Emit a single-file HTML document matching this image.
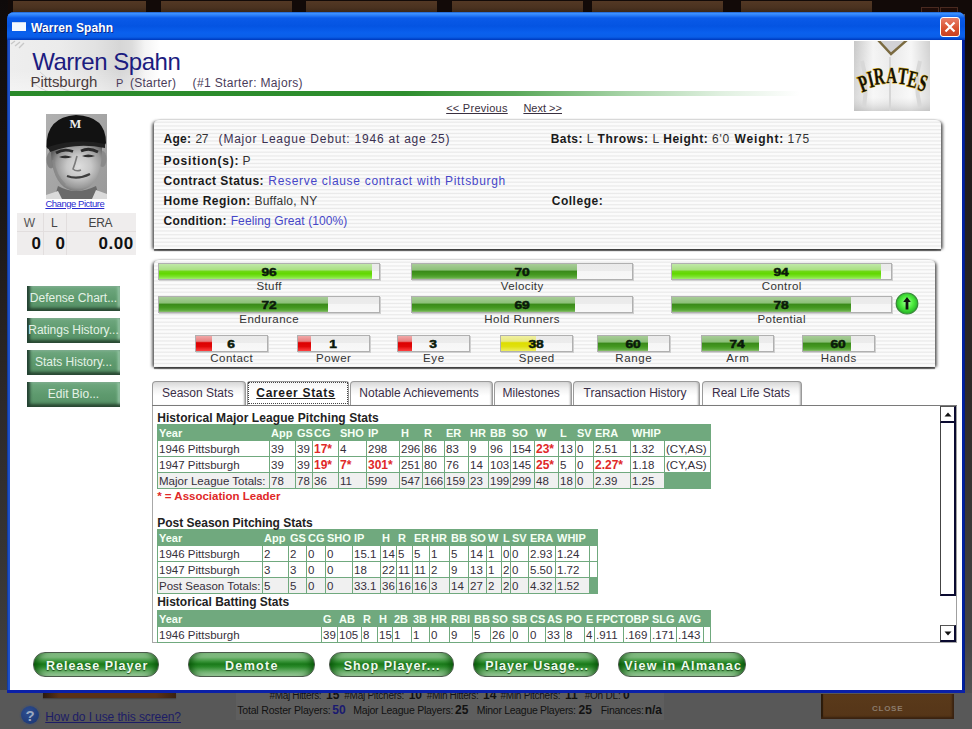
<!DOCTYPE html>
<html><head><meta charset="utf-8">
<style>
*{margin:0;padding:0;box-sizing:border-box}
html,body{width:972px;height:729px;overflow:hidden}
body{position:relative;background:#5e5e5e;font-family:"Liberation Sans",sans-serif;color:#222}
.a{position:absolute;white-space:pre}
.b{position:absolute}
.stripes{background:repeating-linear-gradient(#fbfbfb 0,#fbfbfb 1px,#e9e9e9 2.2px,#fbfbfb 3.4px,#fbfbfb 3.75px)}
</style></head><body>
<div class="b" style="left:0;top:0;width:972px;height:14px;background:#120a08"></div>
<div class="b" style="left:13px;top:1px;width:133px;height:11px;background:linear-gradient(#533824,#4a3220 60%,#3c2818)"></div>
<div class="b" style="left:161px;top:1px;width:131px;height:11px;background:linear-gradient(#533824,#4a3220 60%,#3c2818)"></div>
<div class="b" style="left:306px;top:1px;width:131px;height:11px;background:linear-gradient(#533824,#4a3220 60%,#3c2818)"></div>
<div class="b" style="left:452px;top:1px;width:131px;height:11px;background:linear-gradient(#533824,#4a3220 60%,#3c2818)"></div>
<div class="b" style="left:592px;top:1px;width:131px;height:11px;background:linear-gradient(#533824,#4a3220 60%,#3c2818)"></div>
<div class="b" style="left:741px;top:1px;width:131px;height:11px;background:linear-gradient(#533824,#4a3220 60%,#3c2818)"></div>
<div class="b" style="left:921px;top:7px;width:18px;height:8px;border:1px solid #4a2a20;background:#1e0c08"></div>
<div class="b" style="left:940px;top:7px;width:18px;height:8px;border:1px solid #4a2a20;background:#1e0c08"></div>
<div class="b" style="left:0;top:0;width:8px;height:693px;background:linear-gradient(#0e0a0a 0,#1a1616 200px,#2c2828 390px,#363434 550px,#424242 693px)"></div>
<div class="b" style="left:965px;top:0;width:7px;height:729px;background:linear-gradient(#120a08 0,#120a08 40px,#1e1a1a 120px,#2e2a28 390px,#444 640px,#555 700px)"></div>
<div class="b" style="left:7px;top:12px;width:958px;height:681px;background:linear-gradient(90deg,#0a2a80 0,#1a4cc0 1px,#1e50c8 2px,#1e50c8 calc(100% - 4px),#0020a0 calc(100% - 3px),#0020a0 calc(100% - 1px),#0a1a60 100%);border-radius:7px 7px 0 0"></div>
<div class="b" style="left:7px;top:12px;width:958px;height:28px;border-radius:7px 7px 0 0;background:linear-gradient(#2060c8 0,#3c90ff 1.5px,#2e82fa 3px,#0a5ae8 6px,#0454e2 14px,#0a60ee 21px,#0a5ee8 25px,#0044cc 27px,#0038b8 28px)"></div>
<div class="b" style="left:10px;top:40px;width:952px;height:650px;background:#fff;overflow:hidden"></div>
<div class="b" style="left:12px;top:22px;width:14px;height:9px;background:#f4f8ff;border-top:1px solid #c8d8f0"></div>
<div class="b" style="left:940px;top:17px;width:20px;height:20px;border-radius:3px;border:1px solid #fff;background:linear-gradient(#e8806a,#d8502e 60%,#c84020)"></div>
<svg class="b" style="left:940px;top:17px" width="20" height="20"><path d="M5.5 5.5L14.5 14.5M14.5 5.5L5.5 14.5" stroke="#fff" stroke-width="2.2"/></svg>
<div class="b" style="left:10px;top:40px;width:150px;height:51px;background:linear-gradient(90deg,#eeeeee 0,#ebebeb 50px,#e2e2e2 85px,#d6d6d6 110px,#dcdcdc 122px,#f4f4f4 135px,rgba(255,255,255,0) 150px)"></div>
<div class="b" style="left:10px;top:40px;width:150px;height:51px;background:linear-gradient(#fff0 0,#fff0 60%,rgba(255,255,255,.35) 100%)"></div>
<svg class="b" style="left:10px;top:40px" width="160" height="51"><g stroke="#c8c8c8" stroke-width="1.4" fill="none"><path d="M1 4L5 1M5 6L10 2M9 8L14 3"/></g><path d="M20 40Q40 60 70 51M30 32Q50 50 62 52" stroke="#d4d4d4" stroke-width="1" fill="none"/></svg>
<div class="b" style="left:10px;top:91px;width:790px;height:5px;background:linear-gradient(90deg,#2a8a2a 0,#2e8e2e 50%,#5aa85a 64%,#a8d4a8 78%,#e0f0e0 90%,rgba(255,255,255,0) 100%)"></div>
<svg class="b" style="left:854px;top:41px" width="76" height="70" viewBox="0 0 76 70">
<defs><linearGradient id="jg" x1="0" x2="1"><stop offset="0" stop-color="#c8c8c8"/><stop offset=".25" stop-color="#f4f4f4"/><stop offset=".5" stop-color="#e8e8e8"/><stop offset=".75" stop-color="#f6f6f6"/><stop offset="1" stop-color="#d0d0d0"/></linearGradient>
<linearGradient id="jv" x1="0" y1="0" x2="0" y2="1"><stop offset="0" stop-color="#fff" stop-opacity=".0"/><stop offset=".8" stop-color="#fff" stop-opacity=".3"/><stop offset="1" stop-color="#bbb" stop-opacity=".6"/></linearGradient></defs>
<rect width="76" height="70" fill="url(#jg)"/>
<rect width="76" height="70" fill="url(#jv)"/>
<path d="M8 20Q14 40 10 66M66 20Q60 40 66 66" stroke="#d8d8d8" stroke-width="4" fill="none"/>
<path d="M36 16L36 70" stroke="#d6d6d6" stroke-width="2"/>
<path d="M24 -1L37 13L53 -1" fill="#d2d2d6" stroke="#7a6a40" stroke-width="2.4"/>
<g font-family="Liberation Serif" font-weight="bold" font-size="24" fill="#161208" stroke="#e0b828" stroke-width="1.1" paint-order="stroke"><text transform="translate(12,50) rotate(-20) scale(0.62,1)" text-anchor="middle">P</text><text transform="translate(18.5,46) rotate(-14) scale(0.62,1)" text-anchor="middle">I</text><text transform="translate(26,43) rotate(-7) scale(0.62,1)" text-anchor="middle">R</text><text transform="translate(37.5,42) rotate(0) scale(0.62,1)" text-anchor="middle">A</text><text transform="translate(48,43) rotate(7) scale(0.62,1)" text-anchor="middle">T</text><text transform="translate(57,46) rotate(13) scale(0.62,1)" text-anchor="middle">E</text><text transform="translate(66.5,49.5) rotate(18) scale(0.62,1)" text-anchor="middle">S</text></g>
</svg>
<svg class="b" style="left:46px;top:114px" width="61" height="85" viewBox="0 0 61 85">
<defs>
<radialGradient id="face" cx=".55" cy=".48" r=".6"><stop offset="0" stop-color="#dedede"/><stop offset=".4" stop-color="#c8c8c8"/><stop offset=".75" stop-color="#999"/><stop offset="1" stop-color="#5e5e5e"/></radialGradient>
<linearGradient id="bgp" x1="0" y1="0" x2="1" y2="1"><stop offset="0" stop-color="#b0b0b0"/><stop offset="1" stop-color="#999"/></linearGradient>
</defs>
<rect width="61" height="85" fill="url(#bgp)"/>
<path d="M8 85L12 72Q30 82 50 72L54 85Z" fill="#6a6a6a"/>
<path d="M0 85L0 81L12 77L16 85Z M61 85L61 80L50 76L46 85Z" fill="#dadada"/>
<ellipse cx="5" cy="46" rx="4.5" ry="8.5" fill="#808080"/>
<ellipse cx="56.5" cy="45" rx="4" ry="8" fill="#8a8a8a"/>
<path d="M5 30Q4 62 18 73Q30 81 43 73Q57 62 56 30Z" fill="url(#face)"/>
<path d="M0.5 33Q0 3 30 1Q60 2 60 29Q59 31 58 32Q30 25 2 35Z" fill="#121212"/>
<path d="M2 33Q30 24 59 30L59 34Q30 28 4 38Z" fill="#202020"/>
<text x="29.5" y="13.5" text-anchor="middle" font-family="Liberation Serif" font-weight="bold" font-size="12.5" fill="#eeeeee">M</text>
<path d="M10 39Q18 34 27 37.5M35 37Q43 33 52 38" stroke="#2a2a2a" stroke-width="2.8" fill="none"/>
<path d="M13 43Q19 40 26 43Q19 45.5 13 43Z M36 42Q42 39 49 42Q42 44.5 36 42Z" fill="#2e2e2e"/>
<path d="M31 42Q29 50 27 55Q30 58 35 56" stroke="#7a7a7a" stroke-width="1.6" fill="none"/>
<path d="M21 62Q32 66 44 60" stroke="#3e3e3e" stroke-width="2.2" fill="none"/>
<path d="M7 46Q9 62 19 71" stroke="#888" stroke-width="2.5" fill="none" opacity=".7"/>
</svg>
<div class="b" style="left:17px;top:213px;width:119px;height:42px;background:#efeded"></div>
<div class="b" style="left:43px;top:213px;width:1px;height:42px;background:#e2dede"></div>
<div class="b" style="left:66px;top:213px;width:1px;height:42px;background:#e2dede"></div>
<div class="b" style="left:17px;top:231px;width:119px;height:1px;background:#e2dede"></div>
<div class="b" style="left:27px;top:286px;width:93px;height:25px;background:linear-gradient(#70a880,#5e9a6e 50%,#558f64);box-shadow:inset 4px 0 3px -1px #244232,inset 0 -4px 3px -1px #2a4a34,inset -3px 0 3px -1px #a0d0b0,inset 0 2px 2px -1px #90c0a0"></div>
<div class="b" style="left:27px;top:318px;width:93px;height:25px;background:linear-gradient(#70a880,#5e9a6e 50%,#558f64);box-shadow:inset 4px 0 3px -1px #244232,inset 0 -4px 3px -1px #2a4a34,inset -3px 0 3px -1px #a0d0b0,inset 0 2px 2px -1px #90c0a0"></div>
<div class="b" style="left:27px;top:350px;width:93px;height:25px;background:linear-gradient(#70a880,#5e9a6e 50%,#558f64);box-shadow:inset 4px 0 3px -1px #244232,inset 0 -4px 3px -1px #2a4a34,inset -3px 0 3px -1px #a0d0b0,inset 0 2px 2px -1px #90c0a0"></div>
<div class="b" style="left:27px;top:382px;width:93px;height:25px;background:linear-gradient(#70a880,#5e9a6e 50%,#558f64);box-shadow:inset 4px 0 3px -1px #244232,inset 0 -4px 3px -1px #2a4a34,inset -3px 0 3px -1px #a0d0b0,inset 0 2px 2px -1px #90c0a0"></div>
<div class="b stripes" style="left:154px;top:119px;width:787px;height:130px;border-radius:6px 6px 0 0;border-top:1px solid #d8d8d8;box-shadow:-3px 1px 3px -1px rgba(0,0,0,.6),3px 1px 3px -1px rgba(0,0,0,.6),0 2px 1px -0.5px #6a6a6a;"></div>
<div class="b stripes" style="left:154px;top:259px;width:781px;height:108px;border-radius:6px 6px 0 0;border-top:1px solid #d8d8d8;box-shadow:-3px 1px 3px -1px rgba(0,0,0,.6),3px 1px 3px -1px rgba(0,0,0,.6),0 2px 1px -0.5px #6a6a6a;"></div>
<div class="b" style="left:158px;top:263px;width:222px;height:17px;background:linear-gradient(#eaeaea 0,#ececec 45%,#f6f6f6 50%,#f8f8f8 100%);border:1px solid #b0b0b0;box-shadow:1px 1px 0 #d0d0d0"></div>
<div class="b" style="left:159px;top:264px;width:213px;height:15px;background:linear-gradient(#c0e8a8 0,#a8e080 40%,#70d818 47%,#62d800 65%,#7ee430 85%,#a0ee70 100%)"></div>
<div class="b" style="left:411px;top:263px;width:222px;height:17px;background:linear-gradient(#eaeaea 0,#ececec 45%,#f6f6f6 50%,#f8f8f8 100%);border:1px solid #b0b0b0;box-shadow:1px 1px 0 #d0d0d0"></div>
<div class="b" style="left:412px;top:264px;width:165px;height:15px;background:linear-gradient(#a8cc98 0,#8cc078 40%,#3a8a1a 48%,#449820 70%,#5aa83a 88%,#8cc070 100%)"></div>
<div class="b" style="left:671px;top:263px;width:221px;height:17px;background:linear-gradient(#eaeaea 0,#ececec 45%,#f6f6f6 50%,#f8f8f8 100%);border:1px solid #b0b0b0;box-shadow:1px 1px 0 #d0d0d0"></div>
<div class="b" style="left:672px;top:264px;width:209px;height:15px;background:linear-gradient(#c0e8a8 0,#a8e080 40%,#70d818 47%,#62d800 65%,#7ee430 85%,#a0ee70 100%)"></div>
<div class="b" style="left:158px;top:296px;width:222px;height:17px;background:linear-gradient(#eaeaea 0,#ececec 45%,#f6f6f6 50%,#f8f8f8 100%);border:1px solid #b0b0b0;box-shadow:1px 1px 0 #d0d0d0"></div>
<div class="b" style="left:159px;top:297px;width:169px;height:15px;background:linear-gradient(#a8cc98 0,#8cc078 40%,#3a8a1a 48%,#449820 70%,#5aa83a 88%,#8cc070 100%)"></div>
<div class="b" style="left:411px;top:296px;width:222px;height:17px;background:linear-gradient(#eaeaea 0,#ececec 45%,#f6f6f6 50%,#f8f8f8 100%);border:1px solid #b0b0b0;box-shadow:1px 1px 0 #d0d0d0"></div>
<div class="b" style="left:412px;top:297px;width:163px;height:15px;background:linear-gradient(#a8cc98 0,#8cc078 40%,#3a8a1a 48%,#449820 70%,#5aa83a 88%,#8cc070 100%)"></div>
<div class="b" style="left:671px;top:296px;width:221px;height:17px;background:linear-gradient(#eaeaea 0,#ececec 45%,#f6f6f6 50%,#f8f8f8 100%);border:1px solid #b0b0b0;box-shadow:1px 1px 0 #d0d0d0"></div>
<div class="b" style="left:672px;top:297px;width:179px;height:15px;background:linear-gradient(#a8cc98 0,#8cc078 40%,#3a8a1a 48%,#449820 70%,#5aa83a 88%,#8cc070 100%)"></div>
<div class="b" style="left:195px;top:335px;width:73px;height:17px;background:linear-gradient(#eaeaea 0,#ececec 45%,#f6f6f6 50%,#f8f8f8 100%);border:1px solid #b0b0b0;box-shadow:1px 1px 0 #d0d0d0"></div>
<div class="b" style="left:196px;top:336px;width:16px;height:15px;background:linear-gradient(#f0a8a8 0,#e88080 35%,#dd0000 45%,#e00808 70%,#ff4040 100%)"></div>
<div class="b" style="left:297px;top:335px;width:73px;height:17px;background:linear-gradient(#eaeaea 0,#ececec 45%,#f6f6f6 50%,#f8f8f8 100%);border:1px solid #b0b0b0;box-shadow:1px 1px 0 #d0d0d0"></div>
<div class="b" style="left:298px;top:336px;width:13px;height:15px;background:linear-gradient(#f0a8a8 0,#e88080 35%,#dd0000 45%,#e00808 70%,#ff4040 100%)"></div>
<div class="b" style="left:397px;top:335px;width:73px;height:17px;background:linear-gradient(#eaeaea 0,#ececec 45%,#f6f6f6 50%,#f8f8f8 100%);border:1px solid #b0b0b0;box-shadow:1px 1px 0 #d0d0d0"></div>
<div class="b" style="left:398px;top:336px;width:14px;height:15px;background:linear-gradient(#f0a8a8 0,#e88080 35%,#dd0000 45%,#e00808 70%,#ff4040 100%)"></div>
<div class="b" style="left:500px;top:335px;width:73px;height:17px;background:linear-gradient(#eaeaea 0,#ececec 45%,#f6f6f6 50%,#f8f8f8 100%);border:1px solid #b0b0b0;box-shadow:1px 1px 0 #d0d0d0"></div>
<div class="b" style="left:501px;top:336px;width:35px;height:15px;background:linear-gradient(#f0f0a0 0,#e8e880 35%,#dede00 45%,#e0e010 70%,#eeee60 100%)"></div>
<div class="b" style="left:597px;top:335px;width:73px;height:17px;background:linear-gradient(#eaeaea 0,#ececec 45%,#f6f6f6 50%,#f8f8f8 100%);border:1px solid #b0b0b0;box-shadow:1px 1px 0 #d0d0d0"></div>
<div class="b" style="left:598px;top:336px;width:50px;height:15px;background:linear-gradient(#a8cc98 0,#8cc078 40%,#3a8a1a 48%,#449820 70%,#5aa83a 88%,#8cc070 100%)"></div>
<div class="b" style="left:701px;top:335px;width:73px;height:17px;background:linear-gradient(#eaeaea 0,#ececec 45%,#f6f6f6 50%,#f8f8f8 100%);border:1px solid #b0b0b0;box-shadow:1px 1px 0 #d0d0d0"></div>
<div class="b" style="left:702px;top:336px;width:57px;height:15px;background:linear-gradient(#a8cc98 0,#8cc078 40%,#3a8a1a 48%,#449820 70%,#5aa83a 88%,#8cc070 100%)"></div>
<div class="b" style="left:802px;top:335px;width:73px;height:17px;background:linear-gradient(#eaeaea 0,#ececec 45%,#f6f6f6 50%,#f8f8f8 100%);border:1px solid #b0b0b0;box-shadow:1px 1px 0 #d0d0d0"></div>
<div class="b" style="left:803px;top:336px;width:48px;height:15px;background:linear-gradient(#a8cc98 0,#8cc078 40%,#3a8a1a 48%,#449820 70%,#5aa83a 88%,#8cc070 100%)"></div>
<svg class="b" style="left:895px;top:292px" width="24" height="23" viewBox="0 0 24 23">
<defs><radialGradient id="ug" cx=".5" cy=".45" r=".6"><stop offset="0" stop-color="#a8ffa0"/><stop offset=".45" stop-color="#50ee40"/><stop offset=".85" stop-color="#28b828"/><stop offset="1" stop-color="#1a7a1a"/></radialGradient></defs>
<ellipse cx="12" cy="11.5" rx="10.8" ry="10.5" fill="url(#ug)" stroke="#3a8a3a" stroke-width="1.2"/>
<path d="M12 5L8.2 10H10.6V17.5H13.4V10H15.8Z" fill="#101010"/>
</svg>
<div class="b" style="left:152px;top:405px;width:805px;height:238px;border:1px solid #a8a8a8;border-top-color:#8a8a8a;background:#fff"></div>
<div class="b" style="left:152px;top:381px;width:94px;height:24px;background:linear-gradient(#d8d8d8,#f2f2f2 30%,#fff 60%);border:1px solid #9a9a9a;border-bottom:none;border-radius:4px 4px 0 0;box-shadow:inset -2px 0 2px -1px #aaa"></div>
<div class="b" style="left:247px;top:381px;width:102px;height:24px;background:linear-gradient(#f4f4f4,#fff 40%);border:1px solid #999;border-bottom:none;border-radius:3px 3px 0 0"></div>
<div class="b" style="left:248px;top:382px;width:100px;height:22px;border:1px dotted #444"></div>
<div class="b" style="left:350px;top:381px;width:143px;height:24px;background:linear-gradient(#d8d8d8,#f2f2f2 30%,#fff 60%);border:1px solid #9a9a9a;border-bottom:none;border-radius:4px 4px 0 0;box-shadow:inset -2px 0 2px -1px #aaa"></div>
<div class="b" style="left:494px;top:381px;width:78px;height:24px;background:linear-gradient(#d8d8d8,#f2f2f2 30%,#fff 60%);border:1px solid #9a9a9a;border-bottom:none;border-radius:4px 4px 0 0;box-shadow:inset -2px 0 2px -1px #aaa"></div>
<div class="b" style="left:573px;top:381px;width:127px;height:24px;background:linear-gradient(#d8d8d8,#f2f2f2 30%,#fff 60%);border:1px solid #9a9a9a;border-bottom:none;border-radius:4px 4px 0 0;box-shadow:inset -2px 0 2px -1px #aaa"></div>
<div class="b" style="left:702px;top:381px;width:100px;height:24px;background:linear-gradient(#d8d8d8,#f2f2f2 30%,#fff 60%);border:1px solid #9a9a9a;border-bottom:none;border-radius:4px 4px 0 0;box-shadow:inset -2px 0 2px -1px #aaa"></div>
<div class="b" style="left:152px;top:405px;width:805px;height:1px;background:#7a7a7a"></div>
<div class="b" style="left:157px;top:424px;width:554px;height:65px;background:#70a97e"></div>
<div class="b" style="left:158px;top:441px;width:111px;height:15px;background:#fff"></div>
<div class="b" style="left:270px;top:441px;width:25px;height:15px;background:#fff"></div>
<div class="b" style="left:296px;top:441px;width:16px;height:15px;background:#fff"></div>
<div class="b" style="left:313px;top:441px;width:25px;height:15px;background:#fff"></div>
<div class="b" style="left:339px;top:441px;width:27px;height:15px;background:#fff"></div>
<div class="b" style="left:367px;top:441px;width:32px;height:15px;background:#fff"></div>
<div class="b" style="left:400px;top:441px;width:22px;height:15px;background:#fff"></div>
<div class="b" style="left:423px;top:441px;width:21px;height:15px;background:#fff"></div>
<div class="b" style="left:445px;top:441px;width:23px;height:15px;background:#fff"></div>
<div class="b" style="left:469px;top:441px;width:19px;height:15px;background:#fff"></div>
<div class="b" style="left:489px;top:441px;width:21px;height:15px;background:#fff"></div>
<div class="b" style="left:511px;top:441px;width:23px;height:15px;background:#fff"></div>
<div class="b" style="left:535px;top:441px;width:23px;height:15px;background:#fff"></div>
<div class="b" style="left:559px;top:441px;width:16px;height:15px;background:#fff"></div>
<div class="b" style="left:576px;top:441px;width:17px;height:15px;background:#fff"></div>
<div class="b" style="left:594px;top:441px;width:36px;height:15px;background:#fff"></div>
<div class="b" style="left:631px;top:441px;width:33px;height:15px;background:#fff"></div>
<div class="b" style="left:665px;top:441px;width:45px;height:15px;background:#fff"></div>
<div class="b" style="left:158px;top:457px;width:111px;height:15px;background:#fff"></div>
<div class="b" style="left:270px;top:457px;width:25px;height:15px;background:#fff"></div>
<div class="b" style="left:296px;top:457px;width:16px;height:15px;background:#fff"></div>
<div class="b" style="left:313px;top:457px;width:25px;height:15px;background:#fff"></div>
<div class="b" style="left:339px;top:457px;width:27px;height:15px;background:#fff"></div>
<div class="b" style="left:367px;top:457px;width:32px;height:15px;background:#fff"></div>
<div class="b" style="left:400px;top:457px;width:22px;height:15px;background:#fff"></div>
<div class="b" style="left:423px;top:457px;width:21px;height:15px;background:#fff"></div>
<div class="b" style="left:445px;top:457px;width:23px;height:15px;background:#fff"></div>
<div class="b" style="left:469px;top:457px;width:19px;height:15px;background:#fff"></div>
<div class="b" style="left:489px;top:457px;width:21px;height:15px;background:#fff"></div>
<div class="b" style="left:511px;top:457px;width:23px;height:15px;background:#fff"></div>
<div class="b" style="left:535px;top:457px;width:23px;height:15px;background:#fff"></div>
<div class="b" style="left:559px;top:457px;width:16px;height:15px;background:#fff"></div>
<div class="b" style="left:576px;top:457px;width:17px;height:15px;background:#fff"></div>
<div class="b" style="left:594px;top:457px;width:36px;height:15px;background:#fff"></div>
<div class="b" style="left:631px;top:457px;width:33px;height:15px;background:#fff"></div>
<div class="b" style="left:665px;top:457px;width:45px;height:15px;background:#fff"></div>
<div class="b" style="left:158px;top:473px;width:111px;height:15px;background:#f0f0f0"></div>
<div class="b" style="left:270px;top:473px;width:25px;height:15px;background:#f0f0f0"></div>
<div class="b" style="left:296px;top:473px;width:16px;height:15px;background:#f0f0f0"></div>
<div class="b" style="left:313px;top:473px;width:25px;height:15px;background:#f0f0f0"></div>
<div class="b" style="left:339px;top:473px;width:27px;height:15px;background:#f0f0f0"></div>
<div class="b" style="left:367px;top:473px;width:32px;height:15px;background:#f0f0f0"></div>
<div class="b" style="left:400px;top:473px;width:22px;height:15px;background:#f0f0f0"></div>
<div class="b" style="left:423px;top:473px;width:21px;height:15px;background:#f0f0f0"></div>
<div class="b" style="left:445px;top:473px;width:23px;height:15px;background:#f0f0f0"></div>
<div class="b" style="left:469px;top:473px;width:19px;height:15px;background:#f0f0f0"></div>
<div class="b" style="left:489px;top:473px;width:21px;height:15px;background:#f0f0f0"></div>
<div class="b" style="left:511px;top:473px;width:23px;height:15px;background:#f0f0f0"></div>
<div class="b" style="left:535px;top:473px;width:23px;height:15px;background:#f0f0f0"></div>
<div class="b" style="left:559px;top:473px;width:16px;height:15px;background:#f0f0f0"></div>
<div class="b" style="left:576px;top:473px;width:17px;height:15px;background:#f0f0f0"></div>
<div class="b" style="left:594px;top:473px;width:36px;height:15px;background:#f0f0f0"></div>
<div class="b" style="left:631px;top:473px;width:33px;height:15px;background:#f0f0f0"></div>
<div class="b" style="left:157px;top:529px;width:441px;height:65px;background:#70a97e"></div>
<div class="b" style="left:158px;top:546px;width:104px;height:15px;background:#fff"></div>
<div class="b" style="left:263px;top:546px;width:25px;height:15px;background:#fff"></div>
<div class="b" style="left:289px;top:546px;width:17px;height:15px;background:#fff"></div>
<div class="b" style="left:307px;top:546px;width:18px;height:15px;background:#fff"></div>
<div class="b" style="left:326px;top:546px;width:26px;height:15px;background:#fff"></div>
<div class="b" style="left:353px;top:546px;width:27px;height:15px;background:#fff"></div>
<div class="b" style="left:381px;top:546px;width:15px;height:15px;background:#fff"></div>
<div class="b" style="left:397px;top:546px;width:15px;height:15px;background:#fff"></div>
<div class="b" style="left:413px;top:546px;width:16px;height:15px;background:#fff"></div>
<div class="b" style="left:430px;top:546px;width:19px;height:15px;background:#fff"></div>
<div class="b" style="left:450px;top:546px;width:18px;height:15px;background:#fff"></div>
<div class="b" style="left:469px;top:546px;width:17px;height:15px;background:#fff"></div>
<div class="b" style="left:487px;top:546px;width:14px;height:15px;background:#fff"></div>
<div class="b" style="left:502px;top:546px;width:8px;height:15px;background:#fff"></div>
<div class="b" style="left:511px;top:546px;width:17px;height:15px;background:#fff"></div>
<div class="b" style="left:529px;top:546px;width:26px;height:15px;background:#fff"></div>
<div class="b" style="left:556px;top:546px;width:33px;height:15px;background:#fff"></div>
<div class="b" style="left:590px;top:546px;width:7px;height:15px;background:#fff"></div>
<div class="b" style="left:158px;top:562px;width:104px;height:15px;background:#fff"></div>
<div class="b" style="left:263px;top:562px;width:25px;height:15px;background:#fff"></div>
<div class="b" style="left:289px;top:562px;width:17px;height:15px;background:#fff"></div>
<div class="b" style="left:307px;top:562px;width:18px;height:15px;background:#fff"></div>
<div class="b" style="left:326px;top:562px;width:26px;height:15px;background:#fff"></div>
<div class="b" style="left:353px;top:562px;width:27px;height:15px;background:#fff"></div>
<div class="b" style="left:381px;top:562px;width:15px;height:15px;background:#fff"></div>
<div class="b" style="left:397px;top:562px;width:15px;height:15px;background:#fff"></div>
<div class="b" style="left:413px;top:562px;width:16px;height:15px;background:#fff"></div>
<div class="b" style="left:430px;top:562px;width:19px;height:15px;background:#fff"></div>
<div class="b" style="left:450px;top:562px;width:18px;height:15px;background:#fff"></div>
<div class="b" style="left:469px;top:562px;width:17px;height:15px;background:#fff"></div>
<div class="b" style="left:487px;top:562px;width:14px;height:15px;background:#fff"></div>
<div class="b" style="left:502px;top:562px;width:8px;height:15px;background:#fff"></div>
<div class="b" style="left:511px;top:562px;width:17px;height:15px;background:#fff"></div>
<div class="b" style="left:529px;top:562px;width:26px;height:15px;background:#fff"></div>
<div class="b" style="left:556px;top:562px;width:33px;height:15px;background:#fff"></div>
<div class="b" style="left:590px;top:562px;width:7px;height:15px;background:#fff"></div>
<div class="b" style="left:158px;top:578px;width:104px;height:15px;background:#f0f0f0"></div>
<div class="b" style="left:263px;top:578px;width:25px;height:15px;background:#f0f0f0"></div>
<div class="b" style="left:289px;top:578px;width:17px;height:15px;background:#f0f0f0"></div>
<div class="b" style="left:307px;top:578px;width:18px;height:15px;background:#f0f0f0"></div>
<div class="b" style="left:326px;top:578px;width:26px;height:15px;background:#f0f0f0"></div>
<div class="b" style="left:353px;top:578px;width:27px;height:15px;background:#f0f0f0"></div>
<div class="b" style="left:381px;top:578px;width:15px;height:15px;background:#f0f0f0"></div>
<div class="b" style="left:397px;top:578px;width:15px;height:15px;background:#f0f0f0"></div>
<div class="b" style="left:413px;top:578px;width:16px;height:15px;background:#f0f0f0"></div>
<div class="b" style="left:430px;top:578px;width:19px;height:15px;background:#f0f0f0"></div>
<div class="b" style="left:450px;top:578px;width:18px;height:15px;background:#f0f0f0"></div>
<div class="b" style="left:469px;top:578px;width:17px;height:15px;background:#f0f0f0"></div>
<div class="b" style="left:487px;top:578px;width:14px;height:15px;background:#f0f0f0"></div>
<div class="b" style="left:502px;top:578px;width:8px;height:15px;background:#f0f0f0"></div>
<div class="b" style="left:511px;top:578px;width:17px;height:15px;background:#f0f0f0"></div>
<div class="b" style="left:529px;top:578px;width:26px;height:15px;background:#f0f0f0"></div>
<div class="b" style="left:556px;top:578px;width:33px;height:15px;background:#f0f0f0"></div>
<div class="b" style="left:157px;top:610px;width:554px;height:33px;background:#70a97e"></div>
<div class="b" style="left:158px;top:627px;width:163px;height:15px;background:#fff"></div>
<div class="b" style="left:322px;top:627px;width:15px;height:15px;background:#fff"></div>
<div class="b" style="left:338px;top:627px;width:23px;height:15px;background:#fff"></div>
<div class="b" style="left:362px;top:627px;width:15px;height:15px;background:#fff"></div>
<div class="b" style="left:378px;top:627px;width:14px;height:15px;background:#fff"></div>
<div class="b" style="left:393px;top:627px;width:18px;height:15px;background:#fff"></div>
<div class="b" style="left:412px;top:627px;width:17px;height:15px;background:#fff"></div>
<div class="b" style="left:430px;top:627px;width:19px;height:15px;background:#fff"></div>
<div class="b" style="left:450px;top:627px;width:22px;height:15px;background:#fff"></div>
<div class="b" style="left:473px;top:627px;width:17px;height:15px;background:#fff"></div>
<div class="b" style="left:491px;top:627px;width:19px;height:15px;background:#fff"></div>
<div class="b" style="left:511px;top:627px;width:17px;height:15px;background:#fff"></div>
<div class="b" style="left:529px;top:627px;width:16px;height:15px;background:#fff"></div>
<div class="b" style="left:546px;top:627px;width:18px;height:15px;background:#fff"></div>
<div class="b" style="left:565px;top:627px;width:19px;height:15px;background:#fff"></div>
<div class="b" style="left:585px;top:627px;width:9px;height:15px;background:#fff"></div>
<div class="b" style="left:595px;top:627px;width:28px;height:15px;background:#fff"></div>
<div class="b" style="left:624px;top:627px;width:26px;height:15px;background:#fff"></div>
<div class="b" style="left:651px;top:627px;width:25px;height:15px;background:#fff"></div>
<div class="b" style="left:677px;top:627px;width:26px;height:15px;background:#fff"></div>
<div class="b" style="left:704px;top:627px;width:6px;height:15px;background:#fff"></div>
<div class="b" style="left:940px;top:406px;width:17px;height:236px;background:#fff;border-right:1px solid #a0a0a0"></div>
<div class="b" style="left:940px;top:406px;width:16px;height:17px;background:#fff;border-left:1px solid #444;border-top:1px solid #555;border-right:2px solid #0a0a30;border-bottom:2px solid #0a0a30"></div>
<div class="b" style="left:940px;top:423px;width:16px;height:173px;background:#fff;border-left:1px solid #444;border-right:2px solid #0a0a30;border-bottom:2px solid #0a0a30"></div>
<div class="b" style="left:940px;top:625px;width:16px;height:17px;background:#fff;border-left:1px solid #444;border-top:1px solid #555;border-right:2px solid #0a0a30;border-bottom:2px solid #0a0a30"></div>
<svg class="b" style="left:940px;top:406px" width="16" height="17"><path d="M4.5 10.5L8 6.5L11.5 10.5Z" fill="#111"/></svg>
<svg class="b" style="left:940px;top:625px" width="16" height="17"><path d="M4.5 6.5L8 10.5L11.5 6.5Z" fill="#111"/></svg>
<div class="b" style="left:33px;top:652px;width:126px;height:25px;border-radius:12px;border:1px solid #3a5a3a;background:linear-gradient(#8cc48c 0,#7ab87a 18%,#3a953a 36%,#1a7a1a 48%,#2a8a2a 60%,#78b878 85%,#a4d2a4 100%);border-color:#4a5a4a;box-shadow:inset 7px 0 6px -4px rgba(0,70,0,.7),inset -7px 0 6px -4px rgba(0,70,0,.7)"></div>
<div class="b" style="left:188px;top:652px;width:127px;height:25px;border-radius:12px;border:1px solid #3a5a3a;background:linear-gradient(#8cc48c 0,#7ab87a 18%,#3a953a 36%,#1a7a1a 48%,#2a8a2a 60%,#78b878 85%,#a4d2a4 100%);border-color:#4a5a4a;box-shadow:inset 7px 0 6px -4px rgba(0,70,0,.7),inset -7px 0 6px -4px rgba(0,70,0,.7)"></div>
<div class="b" style="left:329px;top:652px;width:125px;height:25px;border-radius:12px;border:1px solid #3a5a3a;background:linear-gradient(#8cc48c 0,#7ab87a 18%,#3a953a 36%,#1a7a1a 48%,#2a8a2a 60%,#78b878 85%,#a4d2a4 100%);border-color:#4a5a4a;box-shadow:inset 7px 0 6px -4px rgba(0,70,0,.7),inset -7px 0 6px -4px rgba(0,70,0,.7)"></div>
<div class="b" style="left:473px;top:652px;width:126px;height:25px;border-radius:12px;border:1px solid #3a5a3a;background:linear-gradient(#8cc48c 0,#7ab87a 18%,#3a953a 36%,#1a7a1a 48%,#2a8a2a 60%,#78b878 85%,#a4d2a4 100%);border-color:#4a5a4a;box-shadow:inset 7px 0 6px -4px rgba(0,70,0,.7),inset -7px 0 6px -4px rgba(0,70,0,.7)"></div>
<div class="b" style="left:618px;top:652px;width:128px;height:25px;border-radius:12px;border:1px solid #3a5a3a;background:linear-gradient(#8cc48c 0,#7ab87a 18%,#3a953a 36%,#1a7a1a 48%,#2a8a2a 60%,#78b878 85%,#a4d2a4 100%);border-color:#4a5a4a;box-shadow:inset 7px 0 6px -4px rgba(0,70,0,.7),inset -7px 0 6px -4px rgba(0,70,0,.7)"></div>
<div class="b" style="left:0;top:693px;width:972px;height:36px;background:#585858"></div>
<div class="b" style="left:0;top:690px;width:8px;height:39px;background:#585858"></div>
<div class="b" style="left:236px;top:693px;width:428px;height:27px;background:#5e5e5e"></div>
<div class="b" style="left:43px;top:693px;width:133px;height:5px;background:linear-gradient(90deg,#2a1a10,#5a3218 12%,#5a3218 85%,#3a2210);box-shadow:0 1px 1px #444"></div>
<div class="b" style="left:821px;top:694px;width:133px;height:25px;background:linear-gradient(#5a3a1a,#553518);box-shadow:inset -2px -2px 2px #3a2210,inset 2px 0 1px #2a1a0a"></div>
<div class="b" style="left:21px;top:706px;width:18px;height:18px;border-radius:50%;background:radial-gradient(circle at 40% 35%,#2e4e90,#1a3470);box-shadow:0 0 0 1.5px #505560"></div>
<div class="a" style="left:31.00px;top:21.00px;font:bold 12px/14px 'Liberation Sans';color:#fff;letter-spacing:0.099px;text-shadow:1px 1px 0 #0a2a90;">Warren Spahn</div>
<div class="a" style="left:32.20px;top:48.00px;font:normal 24px/27px 'Liberation Sans';color:#1c1c80;letter-spacing:-0.478px;">Warren Spahn</div>
<div class="a" style="left:30.60px;top:73.00px;font:normal 15px/17px 'Liberation Sans';color:#4a3c3c;letter-spacing:-0.083px;">Pittsburgh</div>
<div class="a" style="left:116.00px;top:77.00px;font:normal 11px/12px 'Liberation Sans';color:#4a3c5a;">P</div>
<div class="a" style="left:130.00px;top:76.00px;font:normal 12px/14px 'Liberation Sans';color:#4a3c5a;letter-spacing:0.248px;">(Starter)</div>
<div class="a" style="left:192.60px;top:76.00px;font:normal 12px/14px 'Liberation Sans';color:#4a3c5a;letter-spacing:0.350px;">(#1 Starter: Majors)</div>
<div class="a" style="left:446.20px;top:101.70px;font:normal 11px/12px 'Liberation Sans';color:#3a3040;letter-spacing:0.260px;text-decoration:underline;">&lt;&lt; Previous</div>
<div class="a" style="left:523.40px;top:101.70px;font:normal 11px/12px 'Liberation Sans';color:#3a3040;letter-spacing:0.011px;text-decoration:underline;">Next &gt;&gt;</div>
<div class="a" style="left:45.40px;top:197.60px;font:normal 9.5px/11px 'Liberation Sans';color:#2a2ad0;letter-spacing:-0.468px;text-decoration:underline;">Change Picture</div>
<div class="a" style="left:23.70px;top:215.60px;font:normal 12px/14px 'Liberation Sans';color:#555;">W</div>
<div class="a" style="left:51.00px;top:215.60px;font:normal 12px/14px 'Liberation Sans';color:#444;">L</div>
<div class="a" style="left:88.50px;top:215.60px;font:normal 12px/14px 'Liberation Sans';color:#444;letter-spacing:-0.344px;">ERA</div>
<div class="a" style="left:31.60px;top:234.00px;font:bold 17px/19px 'Liberation Sans';color:#111;">0</div>
<div class="a" style="left:55.50px;top:234.00px;font:bold 17px/19px 'Liberation Sans';color:#111;">0</div>
<div class="a" style="left:98.60px;top:234.00px;font:bold 17px/19px 'Liberation Sans';color:#111;letter-spacing:0.502px;">0.00</div>
<div class="a" style="left:29.81px;top:291.00px;font:normal 12px/14px 'Liberation Sans';color:#e4f2e6;">Defense Chart...</div>
<div class="a" style="left:28.27px;top:323.00px;font:normal 12px/14px 'Liberation Sans';color:#e4f2e6;">Ratings History...</div>
<div class="a" style="left:34.93px;top:355.00px;font:normal 12px/14px 'Liberation Sans';color:#e4f2e6;">Stats History...</div>
<div class="a" style="left:47.82px;top:387.00px;font:normal 12px/14px 'Liberation Sans';color:#e4f2e6;">Edit Bio...</div>
<div class="a" style="left:163.60px;top:131.50px;font:bold 12px/14px 'Liberation Sans';color:#1a1a1a;letter-spacing:0.243px;">Age:</div>
<div class="a" style="left:195.50px;top:131.50px;font:normal 12px/14px 'Liberation Sans';color:#333;letter-spacing:-0.359px;">27</div>
<div class="a" style="left:218.60px;top:131.50px;font:normal 12px/14px 'Liberation Sans';color:#3a3050;letter-spacing:0.786px;">(Major League Debut: 1946 at age 25)</div>
<div class="a" style="left:163.60px;top:154.00px;font:bold 12px/14px 'Liberation Sans';color:#1a1a1a;letter-spacing:0.818px;">Position(s):</div>
<div class="a" style="left:242.50px;top:154.00px;font:normal 12px/14px 'Liberation Sans';color:#333;">P</div>
<div class="a" style="left:163.60px;top:173.70px;font:bold 12px/14px 'Liberation Sans';color:#1a1a1a;letter-spacing:0.444px;">Contract Status:</div>
<div class="a" style="left:268.30px;top:173.70px;font:normal 12px/14px 'Liberation Sans';color:#4646c8;letter-spacing:0.690px;">Reserve clause contract with Pittsburgh</div>
<div class="a" style="left:163.60px;top:193.80px;font:bold 12px/14px 'Liberation Sans';color:#1a1a1a;letter-spacing:0.478px;">Home Region:</div>
<div class="a" style="left:254.50px;top:193.80px;font:normal 12px/14px 'Liberation Sans';color:#333;letter-spacing:0.222px;">Buffalo, NY</div>
<div class="a" style="left:163.60px;top:213.80px;font:bold 12px/14px 'Liberation Sans';color:#1a1a1a;letter-spacing:0.313px;">Condition:</div>
<div class="a" style="left:230.70px;top:213.80px;font:normal 12px/14px 'Liberation Sans';color:#4646c8;letter-spacing:0.103px;">Feeling Great (100%)</div>
<div class="a" style="left:550.80px;top:131.50px;font:bold 12px/14px 'Liberation Sans';color:#1a1a1a;letter-spacing:0.396px;">Bats:</div>
<div class="a" style="left:586.70px;top:131.50px;font:normal 12px/14px 'Liberation Sans';color:#333;">L</div>
<div class="a" style="left:597.50px;top:131.50px;font:bold 12px/14px 'Liberation Sans';color:#1a1a1a;letter-spacing:0.638px;">Throws:</div>
<div class="a" style="left:652.40px;top:131.50px;font:normal 12px/14px 'Liberation Sans';color:#333;">L</div>
<div class="a" style="left:663.20px;top:131.50px;font:bold 12px/14px 'Liberation Sans';color:#1a1a1a;letter-spacing:0.529px;">Height:</div>
<div class="a" style="left:712.00px;top:131.50px;font:normal 12px/14px 'Liberation Sans';color:#333;letter-spacing:0.830px;">6'0</div>
<div class="a" style="left:734.50px;top:131.50px;font:bold 12px/14px 'Liberation Sans';color:#1a1a1a;letter-spacing:0.836px;">Weight:</div>
<div class="a" style="left:787.60px;top:131.50px;font:normal 12px/14px 'Liberation Sans';color:#333;letter-spacing:0.784px;">175</div>
<div class="a" style="left:551.70px;top:193.80px;font:bold 12px/14px 'Liberation Sans';color:#1a1a1a;letter-spacing:0.522px;">College:</div>
<div class="a" style="left:262.88px;top:265.90px;font:bold 11px/12px 'Liberation Sans';color:#0a1a0a;-webkit-text-stroke:0.5px #0a1a0a;transform:scaleX(1.25);transform-origin:50% 50%;">96</div>
<div class="a" style="left:256.45px;top:279.70px;font:normal 11.5px/12px 'Liberation Sans';color:#333;letter-spacing:0.410px;">Stuff</div>
<div class="a" style="left:515.88px;top:265.90px;font:bold 11px/12px 'Liberation Sans';color:#0a1a0a;-webkit-text-stroke:0.5px #0a1a0a;transform:scaleX(1.25);transform-origin:50% 50%;">70</div>
<div class="a" style="left:500.79px;top:279.70px;font:normal 11.5px/12px 'Liberation Sans';color:#333;letter-spacing:0.396px;">Velocity</div>
<div class="a" style="left:775.38px;top:265.90px;font:bold 11px/12px 'Liberation Sans';color:#0a1a0a;-webkit-text-stroke:0.5px #0a1a0a;transform:scaleX(1.25);transform-origin:50% 50%;">94</div>
<div class="a" style="left:761.66px;top:279.70px;font:normal 11.5px/12px 'Liberation Sans';color:#333;letter-spacing:0.433px;">Control</div>
<div class="a" style="left:262.88px;top:298.90px;font:bold 11px/12px 'Liberation Sans';color:#0a1a0a;-webkit-text-stroke:0.5px #0a1a0a;transform:scaleX(1.25);transform-origin:50% 50%;">72</div>
<div class="a" style="left:239.24px;top:313.20px;font:normal 11.5px/12px 'Liberation Sans';color:#333;letter-spacing:0.487px;">Endurance</div>
<div class="a" style="left:515.88px;top:298.90px;font:bold 11px/12px 'Liberation Sans';color:#0a1a0a;-webkit-text-stroke:0.5px #0a1a0a;transform:scaleX(1.25);transform-origin:50% 50%;">69</div>
<div class="a" style="left:484.37px;top:313.20px;font:normal 11.5px/12px 'Liberation Sans';color:#333;letter-spacing:0.448px;">Hold Runners</div>
<div class="a" style="left:775.38px;top:298.90px;font:bold 11px/12px 'Liberation Sans';color:#0a1a0a;-webkit-text-stroke:0.5px #0a1a0a;transform:scaleX(1.25);transform-origin:50% 50%;">78</div>
<div class="a" style="left:757.55px;top:313.20px;font:normal 11.5px/12px 'Liberation Sans';color:#333;letter-spacing:0.392px;">Potential</div>
<div class="a" style="left:228.44px;top:337.90px;font:bold 11px/12px 'Liberation Sans';color:#0a1a0a;-webkit-text-stroke:0.5px #0a1a0a;transform:scaleX(1.25);transform-origin:50% 50%;">6</div>
<div class="a" style="left:210.29px;top:351.50px;font:normal 11.5px/12px 'Liberation Sans';color:#333;letter-spacing:0.462px;">Contact</div>
<div class="a" style="left:330.44px;top:337.90px;font:bold 11px/12px 'Liberation Sans';color:#0a1a0a;-webkit-text-stroke:0.5px #0a1a0a;transform:scaleX(1.25);transform-origin:50% 50%;">1</div>
<div class="a" style="left:316.05px;top:351.50px;font:normal 11.5px/12px 'Liberation Sans';color:#333;letter-spacing:0.571px;">Power</div>
<div class="a" style="left:430.44px;top:337.90px;font:bold 11px/12px 'Liberation Sans';color:#0a1a0a;-webkit-text-stroke:0.5px #0a1a0a;transform:scaleX(1.25);transform-origin:50% 50%;">3</div>
<div class="a" style="left:422.89px;top:351.50px;font:normal 11.5px/12px 'Liberation Sans';color:#333;letter-spacing:0.694px;">Eye</div>
<div class="a" style="left:530.38px;top:337.90px;font:bold 11px/12px 'Liberation Sans';color:#0a1a0a;-webkit-text-stroke:0.5px #0a1a0a;transform:scaleX(1.25);transform-origin:50% 50%;">38</div>
<div class="a" style="left:518.70px;top:351.50px;font:normal 11.5px/12px 'Liberation Sans';color:#333;letter-spacing:0.582px;">Speed</div>
<div class="a" style="left:627.38px;top:337.90px;font:bold 11px/12px 'Liberation Sans';color:#0a1a0a;-webkit-text-stroke:0.5px #0a1a0a;transform:scaleX(1.25);transform-origin:50% 50%;">60</div>
<div class="a" style="left:615.37px;top:351.50px;font:normal 11.5px/12px 'Liberation Sans';color:#333;letter-spacing:0.593px;">Range</div>
<div class="a" style="left:731.38px;top:337.90px;font:bold 11px/12px 'Liberation Sans';color:#0a1a0a;-webkit-text-stroke:0.5px #0a1a0a;transform:scaleX(1.25);transform-origin:50% 50%;">74</div>
<div class="a" style="left:726.21px;top:351.50px;font:normal 11.5px/12px 'Liberation Sans';color:#333;letter-spacing:0.738px;">Arm</div>
<div class="a" style="left:832.38px;top:337.90px;font:bold 11px/12px 'Liberation Sans';color:#0a1a0a;-webkit-text-stroke:0.5px #0a1a0a;transform:scaleX(1.25);transform-origin:50% 50%;">60</div>
<div class="a" style="left:820.71px;top:351.50px;font:normal 11.5px/12px 'Liberation Sans';color:#333;letter-spacing:0.582px;">Hands</div>
<div class="a" style="left:162.00px;top:386.20px;font:normal 12px/14px 'Liberation Sans';color:#3a2e48;">Season Stats</div>
<div class="a" style="left:256.30px;top:386.20px;font:bold 12px/14px 'Liberation Sans';color:#1a1a1a;letter-spacing:0.689px;text-decoration:underline;">Career Stats</div>
<div class="a" style="left:359.30px;top:386.20px;font:normal 12px/14px 'Liberation Sans';color:#3a2e48;">Notable Achievements</div>
<div class="a" style="left:502.50px;top:386.20px;font:normal 12px/14px 'Liberation Sans';color:#3a2e48;">Milestones</div>
<div class="a" style="left:583.60px;top:386.20px;font:normal 12px/14px 'Liberation Sans';color:#3a2e48;">Transaction History</div>
<div class="a" style="left:712.00px;top:386.20px;font:normal 12px/14px 'Liberation Sans';color:#3a2e48;">Real Life Stats</div>
<div class="a" style="left:157.20px;top:410.70px;font:bold 12px/14px 'Liberation Sans';color:#222;letter-spacing:0.078px;">Historical Major League Pitching Stats</div>
<div class="a" style="left:159.00px;top:442.70px;font:normal 11.5px/12px 'Liberation Sans';color:#352f3a;">1946 Pittsburgh</div>
<div class="a" style="left:271.00px;top:442.70px;font:normal 11.5px/12px 'Liberation Sans';color:#352f3a;">39</div>
<div class="a" style="left:297.00px;top:442.70px;font:normal 11.5px/12px 'Liberation Sans';color:#352f3a;">39</div>
<div class="a" style="left:314.00px;top:441.70px;font:bold 12px/14px 'Liberation Sans';color:#e02828;">17*</div>
<div class="a" style="left:340.00px;top:442.70px;font:normal 11.5px/12px 'Liberation Sans';color:#352f3a;">4</div>
<div class="a" style="left:368.00px;top:442.70px;font:normal 11.5px/12px 'Liberation Sans';color:#352f3a;">298</div>
<div class="a" style="left:401.00px;top:442.70px;font:normal 11.5px/12px 'Liberation Sans';color:#352f3a;">296</div>
<div class="a" style="left:424.00px;top:442.70px;font:normal 11.5px/12px 'Liberation Sans';color:#352f3a;">86</div>
<div class="a" style="left:446.00px;top:442.70px;font:normal 11.5px/12px 'Liberation Sans';color:#352f3a;">83</div>
<div class="a" style="left:470.00px;top:442.70px;font:normal 11.5px/12px 'Liberation Sans';color:#352f3a;">9</div>
<div class="a" style="left:490.00px;top:442.70px;font:normal 11.5px/12px 'Liberation Sans';color:#352f3a;">96</div>
<div class="a" style="left:512.00px;top:442.70px;font:normal 11.5px/12px 'Liberation Sans';color:#352f3a;">154</div>
<div class="a" style="left:536.00px;top:441.70px;font:bold 12px/14px 'Liberation Sans';color:#e02828;">23*</div>
<div class="a" style="left:560.00px;top:442.70px;font:normal 11.5px/12px 'Liberation Sans';color:#352f3a;">13</div>
<div class="a" style="left:577.00px;top:442.70px;font:normal 11.5px/12px 'Liberation Sans';color:#352f3a;">0</div>
<div class="a" style="left:595.00px;top:442.70px;font:normal 11.5px/12px 'Liberation Sans';color:#352f3a;">2.51</div>
<div class="a" style="left:632.00px;top:442.70px;font:normal 11.5px/12px 'Liberation Sans';color:#352f3a;">1.32</div>
<div class="a" style="left:666.00px;top:442.70px;font:normal 11.5px/12px 'Liberation Sans';color:#352f3a;">(CY,AS)</div>
<div class="a" style="left:159.00px;top:458.70px;font:normal 11.5px/12px 'Liberation Sans';color:#352f3a;">1947 Pittsburgh</div>
<div class="a" style="left:271.00px;top:458.70px;font:normal 11.5px/12px 'Liberation Sans';color:#352f3a;">39</div>
<div class="a" style="left:297.00px;top:458.70px;font:normal 11.5px/12px 'Liberation Sans';color:#352f3a;">39</div>
<div class="a" style="left:314.00px;top:457.70px;font:bold 12px/14px 'Liberation Sans';color:#e02828;">19*</div>
<div class="a" style="left:340.00px;top:457.70px;font:bold 12px/14px 'Liberation Sans';color:#e02828;">7*</div>
<div class="a" style="left:368.00px;top:457.70px;font:bold 12px/14px 'Liberation Sans';color:#e02828;">301*</div>
<div class="a" style="left:401.00px;top:458.70px;font:normal 11.5px/12px 'Liberation Sans';color:#352f3a;">251</div>
<div class="a" style="left:424.00px;top:458.70px;font:normal 11.5px/12px 'Liberation Sans';color:#352f3a;">80</div>
<div class="a" style="left:446.00px;top:458.70px;font:normal 11.5px/12px 'Liberation Sans';color:#352f3a;">76</div>
<div class="a" style="left:470.00px;top:458.70px;font:normal 11.5px/12px 'Liberation Sans';color:#352f3a;">14</div>
<div class="a" style="left:490.00px;top:458.70px;font:normal 11.5px/12px 'Liberation Sans';color:#352f3a;">103</div>
<div class="a" style="left:512.00px;top:458.70px;font:normal 11.5px/12px 'Liberation Sans';color:#352f3a;">145</div>
<div class="a" style="left:536.00px;top:457.70px;font:bold 12px/14px 'Liberation Sans';color:#e02828;">25*</div>
<div class="a" style="left:560.00px;top:458.70px;font:normal 11.5px/12px 'Liberation Sans';color:#352f3a;">5</div>
<div class="a" style="left:577.00px;top:458.70px;font:normal 11.5px/12px 'Liberation Sans';color:#352f3a;">0</div>
<div class="a" style="left:595.00px;top:457.70px;font:bold 12px/14px 'Liberation Sans';color:#e02828;">2.27*</div>
<div class="a" style="left:632.00px;top:458.70px;font:normal 11.5px/12px 'Liberation Sans';color:#352f3a;">1.18</div>
<div class="a" style="left:666.00px;top:458.70px;font:normal 11.5px/12px 'Liberation Sans';color:#352f3a;">(CY,AS)</div>
<div class="a" style="left:159.00px;top:474.70px;font:normal 11.5px/12px 'Liberation Sans';color:#352f3a;">Major League Totals:</div>
<div class="a" style="left:271.00px;top:474.70px;font:normal 11.5px/12px 'Liberation Sans';color:#352f3a;">78</div>
<div class="a" style="left:297.00px;top:474.70px;font:normal 11.5px/12px 'Liberation Sans';color:#352f3a;">78</div>
<div class="a" style="left:314.00px;top:474.70px;font:normal 11.5px/12px 'Liberation Sans';color:#352f3a;">36</div>
<div class="a" style="left:340.00px;top:474.70px;font:normal 11.5px/12px 'Liberation Sans';color:#352f3a;">11</div>
<div class="a" style="left:368.00px;top:474.70px;font:normal 11.5px/12px 'Liberation Sans';color:#352f3a;">599</div>
<div class="a" style="left:401.00px;top:474.70px;font:normal 11.5px/12px 'Liberation Sans';color:#352f3a;">547</div>
<div class="a" style="left:424.00px;top:474.70px;font:normal 11.5px/12px 'Liberation Sans';color:#352f3a;">166</div>
<div class="a" style="left:446.00px;top:474.70px;font:normal 11.5px/12px 'Liberation Sans';color:#352f3a;">159</div>
<div class="a" style="left:470.00px;top:474.70px;font:normal 11.5px/12px 'Liberation Sans';color:#352f3a;">23</div>
<div class="a" style="left:490.00px;top:474.70px;font:normal 11.5px/12px 'Liberation Sans';color:#352f3a;">199</div>
<div class="a" style="left:512.00px;top:474.70px;font:normal 11.5px/12px 'Liberation Sans';color:#352f3a;">299</div>
<div class="a" style="left:536.00px;top:474.70px;font:normal 11.5px/12px 'Liberation Sans';color:#352f3a;">48</div>
<div class="a" style="left:560.00px;top:474.70px;font:normal 11.5px/12px 'Liberation Sans';color:#352f3a;">18</div>
<div class="a" style="left:577.00px;top:474.70px;font:normal 11.5px/12px 'Liberation Sans';color:#352f3a;">0</div>
<div class="a" style="left:595.00px;top:474.70px;font:normal 11.5px/12px 'Liberation Sans';color:#352f3a;">2.39</div>
<div class="a" style="left:632.00px;top:474.70px;font:normal 11.5px/12px 'Liberation Sans';color:#352f3a;">1.25</div>
<div class="a" style="left:159.00px;top:426.70px;font:bold 11px/12px 'Liberation Sans';color:#f4fff4;">Year</div>
<div class="a" style="left:271.00px;top:426.70px;font:bold 11px/12px 'Liberation Sans';color:#f4fff4;">App</div>
<div class="a" style="left:297.00px;top:426.70px;font:bold 11px/12px 'Liberation Sans';color:#f4fff4;">GS</div>
<div class="a" style="left:314.00px;top:426.70px;font:bold 11px/12px 'Liberation Sans';color:#f4fff4;">CG</div>
<div class="a" style="left:340.00px;top:426.70px;font:bold 11px/12px 'Liberation Sans';color:#f4fff4;">SHO</div>
<div class="a" style="left:368.00px;top:426.70px;font:bold 11px/12px 'Liberation Sans';color:#f4fff4;">IP</div>
<div class="a" style="left:401.00px;top:426.70px;font:bold 11px/12px 'Liberation Sans';color:#f4fff4;">H</div>
<div class="a" style="left:424.00px;top:426.70px;font:bold 11px/12px 'Liberation Sans';color:#f4fff4;">R</div>
<div class="a" style="left:446.00px;top:426.70px;font:bold 11px/12px 'Liberation Sans';color:#f4fff4;">ER</div>
<div class="a" style="left:470.00px;top:426.70px;font:bold 11px/12px 'Liberation Sans';color:#f4fff4;">HR</div>
<div class="a" style="left:490.00px;top:426.70px;font:bold 11px/12px 'Liberation Sans';color:#f4fff4;">BB</div>
<div class="a" style="left:512.00px;top:426.70px;font:bold 11px/12px 'Liberation Sans';color:#f4fff4;">SO</div>
<div class="a" style="left:536.00px;top:426.70px;font:bold 11px/12px 'Liberation Sans';color:#f4fff4;">W</div>
<div class="a" style="left:560.00px;top:426.70px;font:bold 11px/12px 'Liberation Sans';color:#f4fff4;">L</div>
<div class="a" style="left:577.00px;top:426.70px;font:bold 11px/12px 'Liberation Sans';color:#f4fff4;">SV</div>
<div class="a" style="left:595.00px;top:426.70px;font:bold 11px/12px 'Liberation Sans';color:#f4fff4;">ERA</div>
<div class="a" style="left:632.00px;top:426.70px;font:bold 11px/12px 'Liberation Sans';color:#f4fff4;">WHIP</div>
<div class="a" style="left:157.20px;top:490.00px;font:bold 11.5px/12px 'Liberation Sans';color:#e02828;">* = Association Leader</div>
<div class="a" style="left:157.20px;top:515.60px;font:bold 12px/14px 'Liberation Sans';color:#222;">Post Season Pitching Stats</div>
<div class="a" style="left:159.00px;top:547.70px;font:normal 11.5px/12px 'Liberation Sans';color:#352f3a;">1946 Pittsburgh</div>
<div class="a" style="left:264.00px;top:547.70px;font:normal 11.5px/12px 'Liberation Sans';color:#352f3a;">2</div>
<div class="a" style="left:290.00px;top:547.70px;font:normal 11.5px/12px 'Liberation Sans';color:#352f3a;">2</div>
<div class="a" style="left:308.00px;top:547.70px;font:normal 11.5px/12px 'Liberation Sans';color:#352f3a;">0</div>
<div class="a" style="left:327.00px;top:547.70px;font:normal 11.5px/12px 'Liberation Sans';color:#352f3a;">0</div>
<div class="a" style="left:354.00px;top:547.70px;font:normal 11.5px/12px 'Liberation Sans';color:#352f3a;">15.1</div>
<div class="a" style="left:382.00px;top:547.70px;font:normal 11.5px/12px 'Liberation Sans';color:#352f3a;">14</div>
<div class="a" style="left:398.00px;top:547.70px;font:normal 11.5px/12px 'Liberation Sans';color:#352f3a;">5</div>
<div class="a" style="left:414.00px;top:547.70px;font:normal 11.5px/12px 'Liberation Sans';color:#352f3a;">5</div>
<div class="a" style="left:431.00px;top:547.70px;font:normal 11.5px/12px 'Liberation Sans';color:#352f3a;">1</div>
<div class="a" style="left:451.00px;top:547.70px;font:normal 11.5px/12px 'Liberation Sans';color:#352f3a;">5</div>
<div class="a" style="left:470.00px;top:547.70px;font:normal 11.5px/12px 'Liberation Sans';color:#352f3a;">14</div>
<div class="a" style="left:488.00px;top:547.70px;font:normal 11.5px/12px 'Liberation Sans';color:#352f3a;">1</div>
<div class="a" style="left:503.00px;top:547.70px;font:normal 11.5px/12px 'Liberation Sans';color:#352f3a;">0</div>
<div class="a" style="left:512.00px;top:547.70px;font:normal 11.5px/12px 'Liberation Sans';color:#352f3a;">0</div>
<div class="a" style="left:530.00px;top:547.70px;font:normal 11.5px/12px 'Liberation Sans';color:#352f3a;">2.93</div>
<div class="a" style="left:557.00px;top:547.70px;font:normal 11.5px/12px 'Liberation Sans';color:#352f3a;">1.24</div>
<div class="a" style="left:159.00px;top:563.70px;font:normal 11.5px/12px 'Liberation Sans';color:#352f3a;">1947 Pittsburgh</div>
<div class="a" style="left:264.00px;top:563.70px;font:normal 11.5px/12px 'Liberation Sans';color:#352f3a;">3</div>
<div class="a" style="left:290.00px;top:563.70px;font:normal 11.5px/12px 'Liberation Sans';color:#352f3a;">3</div>
<div class="a" style="left:308.00px;top:563.70px;font:normal 11.5px/12px 'Liberation Sans';color:#352f3a;">0</div>
<div class="a" style="left:327.00px;top:563.70px;font:normal 11.5px/12px 'Liberation Sans';color:#352f3a;">0</div>
<div class="a" style="left:354.00px;top:563.70px;font:normal 11.5px/12px 'Liberation Sans';color:#352f3a;">18</div>
<div class="a" style="left:382.00px;top:563.70px;font:normal 11.5px/12px 'Liberation Sans';color:#352f3a;">22</div>
<div class="a" style="left:398.00px;top:563.70px;font:normal 11.5px/12px 'Liberation Sans';color:#352f3a;">11</div>
<div class="a" style="left:414.00px;top:563.70px;font:normal 11.5px/12px 'Liberation Sans';color:#352f3a;">11</div>
<div class="a" style="left:431.00px;top:563.70px;font:normal 11.5px/12px 'Liberation Sans';color:#352f3a;">2</div>
<div class="a" style="left:451.00px;top:563.70px;font:normal 11.5px/12px 'Liberation Sans';color:#352f3a;">9</div>
<div class="a" style="left:470.00px;top:563.70px;font:normal 11.5px/12px 'Liberation Sans';color:#352f3a;">13</div>
<div class="a" style="left:488.00px;top:563.70px;font:normal 11.5px/12px 'Liberation Sans';color:#352f3a;">1</div>
<div class="a" style="left:503.00px;top:563.70px;font:normal 11.5px/12px 'Liberation Sans';color:#352f3a;">2</div>
<div class="a" style="left:512.00px;top:563.70px;font:normal 11.5px/12px 'Liberation Sans';color:#352f3a;">0</div>
<div class="a" style="left:530.00px;top:563.70px;font:normal 11.5px/12px 'Liberation Sans';color:#352f3a;">5.50</div>
<div class="a" style="left:557.00px;top:563.70px;font:normal 11.5px/12px 'Liberation Sans';color:#352f3a;">1.72</div>
<div class="a" style="left:159.00px;top:579.70px;font:normal 11.5px/12px 'Liberation Sans';color:#352f3a;">Post Season Totals:</div>
<div class="a" style="left:264.00px;top:579.70px;font:normal 11.5px/12px 'Liberation Sans';color:#352f3a;">5</div>
<div class="a" style="left:290.00px;top:579.70px;font:normal 11.5px/12px 'Liberation Sans';color:#352f3a;">5</div>
<div class="a" style="left:308.00px;top:579.70px;font:normal 11.5px/12px 'Liberation Sans';color:#352f3a;">0</div>
<div class="a" style="left:327.00px;top:579.70px;font:normal 11.5px/12px 'Liberation Sans';color:#352f3a;">0</div>
<div class="a" style="left:354.00px;top:579.70px;font:normal 11.5px/12px 'Liberation Sans';color:#352f3a;">33.1</div>
<div class="a" style="left:382.00px;top:579.70px;font:normal 11.5px/12px 'Liberation Sans';color:#352f3a;">36</div>
<div class="a" style="left:398.00px;top:579.70px;font:normal 11.5px/12px 'Liberation Sans';color:#352f3a;">16</div>
<div class="a" style="left:414.00px;top:579.70px;font:normal 11.5px/12px 'Liberation Sans';color:#352f3a;">16</div>
<div class="a" style="left:431.00px;top:579.70px;font:normal 11.5px/12px 'Liberation Sans';color:#352f3a;">3</div>
<div class="a" style="left:451.00px;top:579.70px;font:normal 11.5px/12px 'Liberation Sans';color:#352f3a;">14</div>
<div class="a" style="left:470.00px;top:579.70px;font:normal 11.5px/12px 'Liberation Sans';color:#352f3a;">27</div>
<div class="a" style="left:488.00px;top:579.70px;font:normal 11.5px/12px 'Liberation Sans';color:#352f3a;">2</div>
<div class="a" style="left:503.00px;top:579.70px;font:normal 11.5px/12px 'Liberation Sans';color:#352f3a;">2</div>
<div class="a" style="left:512.00px;top:579.70px;font:normal 11.5px/12px 'Liberation Sans';color:#352f3a;">0</div>
<div class="a" style="left:530.00px;top:579.70px;font:normal 11.5px/12px 'Liberation Sans';color:#352f3a;">4.32</div>
<div class="a" style="left:557.00px;top:579.70px;font:normal 11.5px/12px 'Liberation Sans';color:#352f3a;">1.52</div>
<div class="a" style="left:159.00px;top:531.70px;font:bold 11px/12px 'Liberation Sans';color:#f4fff4;">Year</div>
<div class="a" style="left:264.00px;top:531.70px;font:bold 11px/12px 'Liberation Sans';color:#f4fff4;">App</div>
<div class="a" style="left:290.00px;top:531.70px;font:bold 11px/12px 'Liberation Sans';color:#f4fff4;">GS</div>
<div class="a" style="left:308.00px;top:531.70px;font:bold 11px/12px 'Liberation Sans';color:#f4fff4;">CG</div>
<div class="a" style="left:327.00px;top:531.70px;font:bold 11px/12px 'Liberation Sans';color:#f4fff4;">SHO</div>
<div class="a" style="left:354.00px;top:531.70px;font:bold 11px/12px 'Liberation Sans';color:#f4fff4;">IP</div>
<div class="a" style="left:382.00px;top:531.70px;font:bold 11px/12px 'Liberation Sans';color:#f4fff4;">H</div>
<div class="a" style="left:398.00px;top:531.70px;font:bold 11px/12px 'Liberation Sans';color:#f4fff4;">R</div>
<div class="a" style="left:414.00px;top:531.70px;font:bold 11px/12px 'Liberation Sans';color:#f4fff4;">ER</div>
<div class="a" style="left:431.00px;top:531.70px;font:bold 11px/12px 'Liberation Sans';color:#f4fff4;">HR</div>
<div class="a" style="left:451.00px;top:531.70px;font:bold 11px/12px 'Liberation Sans';color:#f4fff4;">BB</div>
<div class="a" style="left:470.00px;top:531.70px;font:bold 11px/12px 'Liberation Sans';color:#f4fff4;">SO</div>
<div class="a" style="left:488.00px;top:531.70px;font:bold 11px/12px 'Liberation Sans';color:#f4fff4;">W</div>
<div class="a" style="left:503.00px;top:531.70px;font:bold 11px/12px 'Liberation Sans';color:#f4fff4;">L</div>
<div class="a" style="left:512.00px;top:531.70px;font:bold 11px/12px 'Liberation Sans';color:#f4fff4;">SV</div>
<div class="a" style="left:530.00px;top:531.70px;font:bold 11px/12px 'Liberation Sans';color:#f4fff4;">ERA</div>
<div class="a" style="left:557.00px;top:531.70px;font:bold 11px/12px 'Liberation Sans';color:#f4fff4;">WHIP</div>
<div class="a" style="left:157.20px;top:595.00px;font:bold 12px/14px 'Liberation Sans';color:#222;">Historical Batting Stats</div>
<div class="a" style="left:159.00px;top:628.70px;font:normal 11.5px/12px 'Liberation Sans';color:#352f3a;">1946 Pittsburgh</div>
<div class="a" style="left:323.00px;top:628.70px;font:normal 11.5px/12px 'Liberation Sans';color:#352f3a;">39</div>
<div class="a" style="left:339.00px;top:628.70px;font:normal 11.5px/12px 'Liberation Sans';color:#352f3a;">105</div>
<div class="a" style="left:363.00px;top:628.70px;font:normal 11.5px/12px 'Liberation Sans';color:#352f3a;">8</div>
<div class="a" style="left:379.00px;top:628.70px;font:normal 11.5px/12px 'Liberation Sans';color:#352f3a;">15</div>
<div class="a" style="left:394.00px;top:628.70px;font:normal 11.5px/12px 'Liberation Sans';color:#352f3a;">1</div>
<div class="a" style="left:413.00px;top:628.70px;font:normal 11.5px/12px 'Liberation Sans';color:#352f3a;">1</div>
<div class="a" style="left:431.00px;top:628.70px;font:normal 11.5px/12px 'Liberation Sans';color:#352f3a;">0</div>
<div class="a" style="left:451.00px;top:628.70px;font:normal 11.5px/12px 'Liberation Sans';color:#352f3a;">9</div>
<div class="a" style="left:474.00px;top:628.70px;font:normal 11.5px/12px 'Liberation Sans';color:#352f3a;">5</div>
<div class="a" style="left:492.00px;top:628.70px;font:normal 11.5px/12px 'Liberation Sans';color:#352f3a;">26</div>
<div class="a" style="left:512.00px;top:628.70px;font:normal 11.5px/12px 'Liberation Sans';color:#352f3a;">0</div>
<div class="a" style="left:530.00px;top:628.70px;font:normal 11.5px/12px 'Liberation Sans';color:#352f3a;">0</div>
<div class="a" style="left:547.00px;top:628.70px;font:normal 11.5px/12px 'Liberation Sans';color:#352f3a;">33</div>
<div class="a" style="left:566.00px;top:628.70px;font:normal 11.5px/12px 'Liberation Sans';color:#352f3a;">8</div>
<div class="a" style="left:586.00px;top:628.70px;font:normal 11.5px/12px 'Liberation Sans';color:#352f3a;">4</div>
<div class="a" style="left:596.00px;top:628.70px;font:normal 11.5px/12px 'Liberation Sans';color:#352f3a;">.911</div>
<div class="a" style="left:625.00px;top:628.70px;font:normal 11.5px/12px 'Liberation Sans';color:#352f3a;">.169</div>
<div class="a" style="left:652.00px;top:628.70px;font:normal 11.5px/12px 'Liberation Sans';color:#352f3a;">.171</div>
<div class="a" style="left:678.00px;top:628.70px;font:normal 11.5px/12px 'Liberation Sans';color:#352f3a;">.143</div>
<div class="a" style="left:159.00px;top:612.70px;font:bold 11px/12px 'Liberation Sans';color:#f4fff4;">Year</div>
<div class="a" style="left:323.00px;top:612.70px;font:bold 11px/12px 'Liberation Sans';color:#f4fff4;">G</div>
<div class="a" style="left:339.00px;top:612.70px;font:bold 11px/12px 'Liberation Sans';color:#f4fff4;">AB</div>
<div class="a" style="left:363.00px;top:612.70px;font:bold 11px/12px 'Liberation Sans';color:#f4fff4;">R</div>
<div class="a" style="left:379.00px;top:612.70px;font:bold 11px/12px 'Liberation Sans';color:#f4fff4;">H</div>
<div class="a" style="left:394.00px;top:612.70px;font:bold 11px/12px 'Liberation Sans';color:#f4fff4;">2B</div>
<div class="a" style="left:413.00px;top:612.70px;font:bold 11px/12px 'Liberation Sans';color:#f4fff4;">3B</div>
<div class="a" style="left:431.00px;top:612.70px;font:bold 11px/12px 'Liberation Sans';color:#f4fff4;">HR</div>
<div class="a" style="left:451.00px;top:612.70px;font:bold 11px/12px 'Liberation Sans';color:#f4fff4;">RBI</div>
<div class="a" style="left:474.00px;top:612.70px;font:bold 11px/12px 'Liberation Sans';color:#f4fff4;">BB</div>
<div class="a" style="left:492.00px;top:612.70px;font:bold 11px/12px 'Liberation Sans';color:#f4fff4;">SO</div>
<div class="a" style="left:512.00px;top:612.70px;font:bold 11px/12px 'Liberation Sans';color:#f4fff4;">SB</div>
<div class="a" style="left:530.00px;top:612.70px;font:bold 11px/12px 'Liberation Sans';color:#f4fff4;">CS</div>
<div class="a" style="left:547.00px;top:612.70px;font:bold 11px/12px 'Liberation Sans';color:#f4fff4;">AS</div>
<div class="a" style="left:566.00px;top:612.70px;font:bold 11px/12px 'Liberation Sans';color:#f4fff4;">PO</div>
<div class="a" style="left:586.00px;top:612.70px;font:bold 11px/12px 'Liberation Sans';color:#f4fff4;">E</div>
<div class="a" style="left:596.00px;top:612.70px;font:bold 11px/12px 'Liberation Sans';color:#f4fff4;">FPCT</div>
<div class="a" style="left:625.00px;top:612.70px;font:bold 11px/12px 'Liberation Sans';color:#f4fff4;">OBP</div>
<div class="a" style="left:652.00px;top:612.70px;font:bold 11px/12px 'Liberation Sans';color:#f4fff4;">SLG</div>
<div class="a" style="left:678.00px;top:612.70px;font:bold 11px/12px 'Liberation Sans';color:#f4fff4;">AVG</div>
<div class="a" style="left:46.00px;top:659.00px;font:bold 12.5px/14px 'Liberation Sans';color:#eefcee;letter-spacing:1.003px;text-shadow:0 1px 1px #1a4a1a;">Release Player</div>
<div class="a" style="left:225.00px;top:659.00px;font:bold 12.5px/14px 'Liberation Sans';color:#eefcee;letter-spacing:1.331px;text-shadow:0 1px 1px #1a4a1a;">Demote</div>
<div class="a" style="left:343.70px;top:659.00px;font:bold 12.5px/14px 'Liberation Sans';color:#eefcee;letter-spacing:1.055px;text-shadow:0 1px 1px #1a4a1a;">Shop Player...</div>
<div class="a" style="left:485.30px;top:659.00px;font:bold 12.5px/14px 'Liberation Sans';color:#eefcee;letter-spacing:0.982px;text-shadow:0 1px 1px #1a4a1a;">Player Usage...</div>
<div class="a" style="left:624.20px;top:659.00px;font:bold 12.5px/14px 'Liberation Sans';color:#eefcee;letter-spacing:1.338px;text-shadow:0 1px 1px #1a4a1a;">View in Almanac</div>
<div class="a" style="left:872.00px;top:704.00px;font:bold 8px/9px 'Liberation Sans';color:#8c7c6c;letter-spacing:0.734px;">CLOSE</div>
<div class="a" style="left:25.50px;top:707.00px;font:bold 15px/17px 'Liberation Sans';color:#9aa8c0;">?</div>
<div class="a" style="left:45.30px;top:710.00px;font:normal 12px/14px 'Liberation Sans';color:#1c1c66;letter-spacing:-0.099px;text-decoration:underline;">How do I use this screen?</div>
<div class="a" style="left:269.60px;top:690.00px;font:normal 10px/11px 'Liberation Sans';color:#121212;letter-spacing:-0.344px;">#Maj Hitters:</div>
<div class="a" style="left:326.00px;top:688.00px;font:bold 12px/14px 'Liberation Sans';color:#121212;">15</div>
<div class="a" style="left:344.30px;top:690.00px;font:normal 10px/11px 'Liberation Sans';color:#121212;letter-spacing:-0.258px;">#Maj Pitchers:</div>
<div class="a" style="left:408.70px;top:688.00px;font:bold 12px/14px 'Liberation Sans';color:#121212;">10</div>
<div class="a" style="left:426.80px;top:690.00px;font:normal 10px/11px 'Liberation Sans';color:#121212;letter-spacing:-0.344px;">#Min Hitters:</div>
<div class="a" style="left:483.00px;top:688.00px;font:bold 12px/14px 'Liberation Sans';color:#121212;">14</div>
<div class="a" style="left:500.50px;top:690.00px;font:normal 10px/11px 'Liberation Sans';color:#121212;letter-spacing:-0.258px;">#Min Pitchers:</div>
<div class="a" style="left:565.00px;top:688.00px;font:bold 12px/14px 'Liberation Sans';color:#121212;">11</div>
<div class="a" style="left:584.70px;top:690.00px;font:normal 10px/11px 'Liberation Sans';color:#121212;letter-spacing:-0.208px;">#On DL:</div>
<div class="a" style="left:623.00px;top:688.00px;font:bold 12px/14px 'Liberation Sans';color:#121212;">0</div>
<div class="a" style="left:237.20px;top:703.80px;font:normal 10.5px/12px 'Liberation Sans';color:#121212;letter-spacing:-0.169px;">Total Roster Players:</div>
<div class="a" style="left:332.30px;top:702.80px;font:bold 12px/14px 'Liberation Sans';color:#1a1a70;">50</div>
<div class="a" style="left:353.30px;top:703.80px;font:normal 10.5px/12px 'Liberation Sans';color:#121212;letter-spacing:-0.253px;">Major League Players:</div>
<div class="a" style="left:455.00px;top:702.80px;font:bold 12px/14px 'Liberation Sans';color:#121212;">25</div>
<div class="a" style="left:476.80px;top:703.80px;font:normal 10.5px/12px 'Liberation Sans';color:#121212;letter-spacing:-0.293px;">Minor League Players:</div>
<div class="a" style="left:578.50px;top:702.80px;font:bold 12px/14px 'Liberation Sans';color:#121212;">25</div>
<div class="a" style="left:600.70px;top:703.80px;font:normal 10.5px/12px 'Liberation Sans';color:#121212;letter-spacing:-0.279px;">Finances:</div>
<div class="a" style="left:644.70px;top:702.80px;font:bold 12px/14px 'Liberation Sans';color:#121212;">n/a</div>
<div class="b" style="left:7px;top:690px;width:958px;height:3px;background:#0a20a8"></div>
</body></html>
